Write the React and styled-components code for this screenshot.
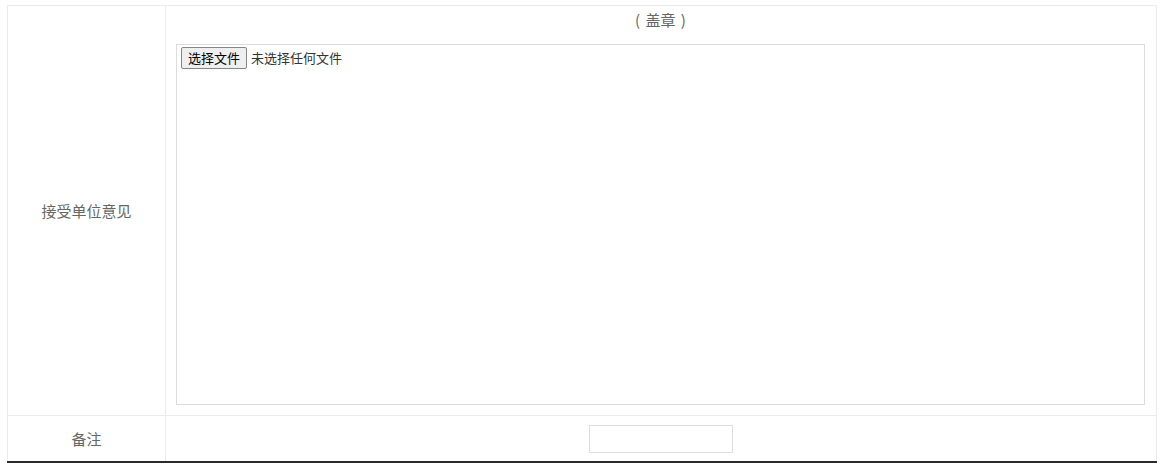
import React from 'react';
import styled, { createGlobalStyle } from 'styled-components';

const GlobalStyle = createGlobalStyle`
  html, body {
    margin: 0;
    padding: 0;
    background: #fff;
  }
  body {
    font-family: "Noto Sans CJK SC", "Noto Sans", sans-serif;
    color: #666;
  }
`;

const Page = styled.div`
  padding: 5px 12px 0 7px;
`;

const FormTable = styled.table`
  width: 1150px;
  border-collapse: collapse;
  table-layout: fixed;
  border-bottom: 2px solid #2b2b2b;
`;

const LabelCell = styled.td`
  width: 157px;
  border: 1px solid #ebebeb;
  text-align: center;
  vertical-align: middle;
  font-size: 15px;
  color: #666;
  padding: 0;
`;

const ValueCell = styled.td`
  border: 1px solid #ebebeb;
  padding: ${(p) => p.$pad || '0'};
  text-align: center;
  vertical-align: middle;
`;

const SealTitle = styled.div`
  height: 38px;
  line-height: 28px;
  font-size: 15px;
  color: #666;
  text-align: center;
  word-spacing: 2px;
`;

const UploadBox = styled.div`
  height: 355px;
  border: 1px solid #dcdcdc;
  padding: 2px 4px;
  display: flex;
  align-items: flex-start;
  gap: 4px;
  text-align: left;
`;

const PickButton = styled.button`
  font-family: "Noto Sans CJK SC", sans-serif;
  font-size: 13px;
  line-height: 18px;
  height: 22px;
  padding: 1px 6px;
  color: #000;
  background: #efefef;
  border: 1px solid #858585;
  border-radius: 2px;
`;

const FileStatus = styled.span`
  font-size: 13px;
  line-height: 22px;
  color: #333;
`;

const NoteInput = styled.input`
  width: 144px;
  height: 28px;
  box-sizing: border-box;
  border: 1px solid #dedede;
  outline: none;
  padding: 0 6px;
  font-size: 13px;
`;

const NoteRow = styled.tr`
  height: 46px;
`;

export default function App() {
  return (
    <Page>
      <GlobalStyle />
      <FormTable>
        <tbody>
          <tr>
            <LabelCell>接受单位意见</LabelCell>
            <ValueCell $pad="0 11px 10px 10px">
              <SealTitle>( 盖章 )</SealTitle>
              <UploadBox>
                <PickButton type="button">选择文件</PickButton>
                <FileStatus>未选择任何文件</FileStatus>
              </UploadBox>
            </ValueCell>
          </tr>
          <NoteRow>
            <LabelCell>备注</LabelCell>
            <ValueCell>
              <NoteInput type="text" />
            </ValueCell>
          </NoteRow>
        </tbody>
      </FormTable>
    </Page>
  );
}
